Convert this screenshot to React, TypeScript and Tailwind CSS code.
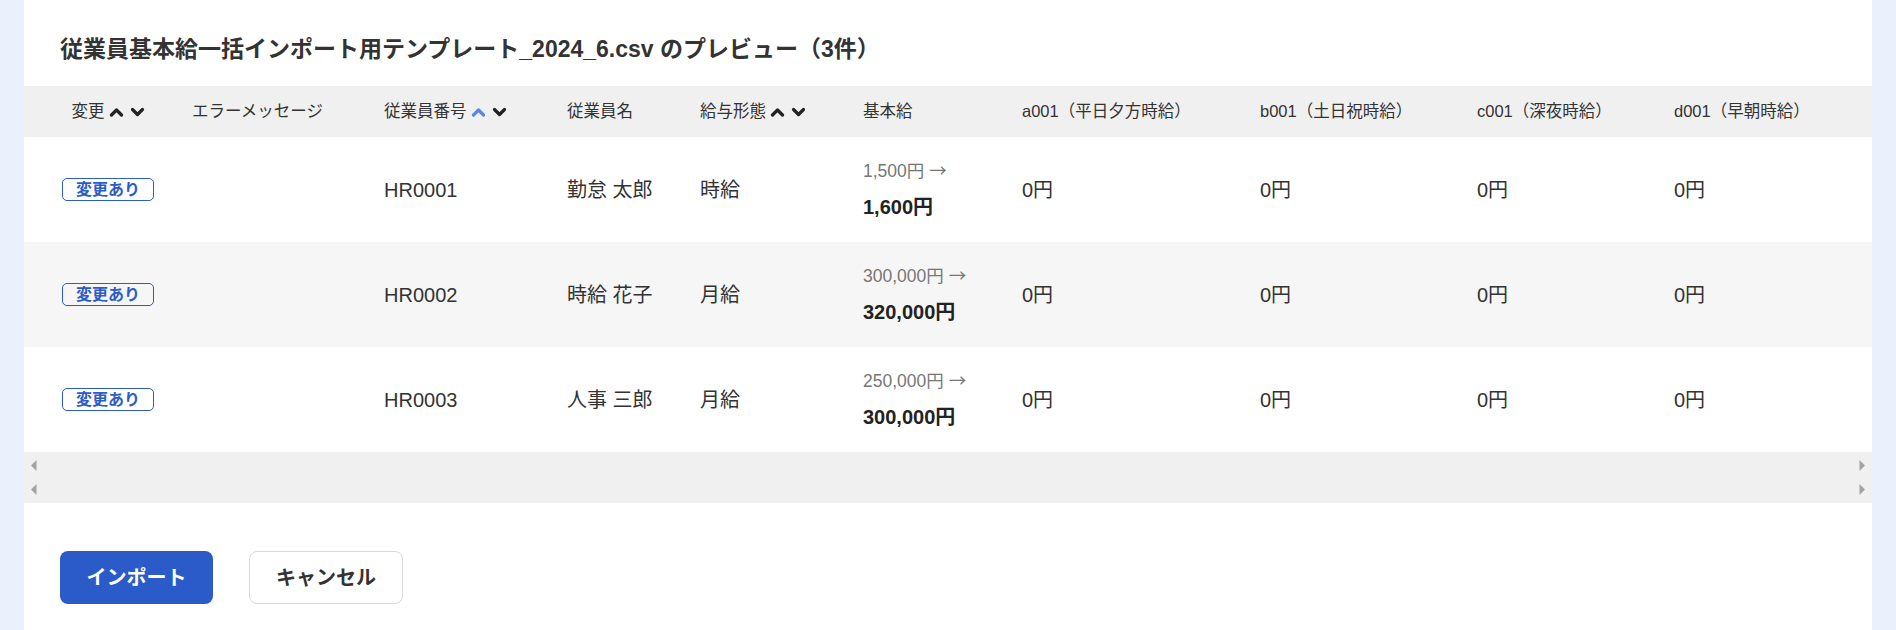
import React from 'react';

type Row = {
    code: string;
    name: string;
    payType: string;
    before: string;
    after: string;
};

const rows: Row[] = [
    { code: 'HR0001', name: '勤怠 太郎', payType: '時給', before: '1,500円', after: '1,600円' },
    { code: 'HR0002', name: '時給 花子', payType: '月給', before: '300,000円', after: '320,000円' },
    { code: 'HR0003', name: '人事 三郎', payType: '月給', before: '250,000円', after: '300,000円' },
];

const allowanceCols = ['a001（平日夕方時給）', 'b001（土日祝時給）', 'c001（深夜時給）', 'd001（早朝時給）'];

// column widths shared by the header and the body rows
const gridCols = 'grid grid-cols-[168px_192px_183px_133px_163px_159px_238px_217px_197px_198px]';

const Chevron: React.FC<{ dir: 'up' | 'down'; active?: boolean }> = ({ dir, active }) => (
    <svg width="15" height="10" viewBox="0 0 15 10" className={active ? 'text-[#5b86e5]' : 'text-[#222]'}>
        <polyline
            points={dir === 'up' ? '2.5,8 7.5,3 12.5,8' : '2.5,2.5 7.5,7.5 12.5,2.5'}
            fill="none"
            stroke="currentColor"
            strokeWidth="3.2"
            strokeLinecap="round"
            strokeLinejoin="round"
        />
    </svg>
);

const SortIcons: React.FC<{ upActive?: boolean }> = ({ upActive }) => (
    <span className="inline-flex items-center gap-[6px] ml-[4px]">
        <Chevron dir="up" active={upActive} />
        <Chevron dir="down" />
    </span>
);

const ScrollArrow: React.FC<{ dir: 'left' | 'right' }> = ({ dir }) => (
    <svg width="6" height="11" viewBox="0 0 6 11">
        <polygon points={dir === 'left' ? '5.5,0 5.5,11 0,5.5' : '0.5,0 0.5,11 6,5.5'} fill="#a3a3a3" />
    </svg>
);

const App: React.FC = () => {
    return (
        <div
            className="min-h-screen bg-[#eaf1fd] px-6"
            style={{ fontFamily: '"Liberation Sans", "Noto Sans CJK JP", sans-serif' }}
        >
            <div className="bg-white min-h-[630px]">
                <h2 className="px-[36px] pt-[32px] pb-[20px] text-[23px] leading-[34px] font-bold text-[#333]">
                    従業員基本給一括インポート用テンプレート_2024_6.csv のプレビュー（3件）
                </h2>

                {/* preview table */}
                <div className="overflow-hidden">
                    <div className={`${gridCols} h-[51px] items-center bg-[#f0f0f0] text-[16.5px] text-[#333]`}>
                        <div className="flex items-center justify-center">
                            変更
                            <SortIcons />
                        </div>
                        <div>エラーメッセージ</div>
                        <div className="flex items-center">
                            従業員番号
                            <SortIcons upActive />
                        </div>
                        <div>従業員名</div>
                        <div className="flex items-center">
                            給与形態
                            <SortIcons />
                        </div>
                        <div>基本給</div>
                        {allowanceCols.map((c) => (
                            <div key={c}>{c}</div>
                        ))}
                    </div>

                    {rows.map((r, i) => (
                        <div
                            key={r.code}
                            className={`${gridCols} h-[105px] items-center text-[20px] text-[#333] ${i % 2 === 1 ? 'bg-[#f6f6f6]' : 'bg-white'}`}
                        >
                            <div className="flex justify-center">
                                <span className="inline-flex items-center h-[23px] px-[13px] border border-[#2c5cc8] rounded-[5px] text-[16px] leading-none font-bold text-[#2c5cc8]">
                                    変更あり
                                </span>
                            </div>
                            <div></div>
                            <div>{r.code}</div>
                            <div>{r.name}</div>
                            <div>{r.payType}</div>
                            <div className="flex flex-col gap-[8px]">
                                <span className="text-[17.5px] leading-[26px] text-[#777]">
                                    {r.before}{' '}
                                    <span style={{ fontFamily: '"Noto Sans CJK JP", sans-serif' }}>→</span>
                                </span>
                                <span className="text-[20px] leading-[30px] font-bold text-[#222]">{r.after}</span>
                            </div>
                            {allowanceCols.map((c) => (
                                <div key={c}>0円</div>
                            ))}
                        </div>
                    ))}
                </div>

                {/* horizontal scroll bars */}
                <div className="h-[51px] bg-[#f0f0f0] flex items-center justify-between px-[7px]">
                    <div className="flex flex-col gap-[13px]">
                        <ScrollArrow dir="left" />
                        <ScrollArrow dir="left" />
                    </div>
                    <div className="flex flex-col gap-[13px]">
                        <ScrollArrow dir="right" />
                        <ScrollArrow dir="right" />
                    </div>
                </div>

                <div className="flex gap-[36px] px-[36px] pt-[48px]">
                    <button className="w-[153px] h-[53px] rounded-[8px] bg-[#2b5bc8] text-white text-[20px] font-bold">
                        インポート
                    </button>
                    <button className="w-[154px] h-[53px] rounded-[8px] bg-white border border-[#d9d9d9] text-[#333] text-[20px] font-bold">
                        キャンセル
                    </button>
                </div>
            </div>
        </div>
    );
};

export default App;
